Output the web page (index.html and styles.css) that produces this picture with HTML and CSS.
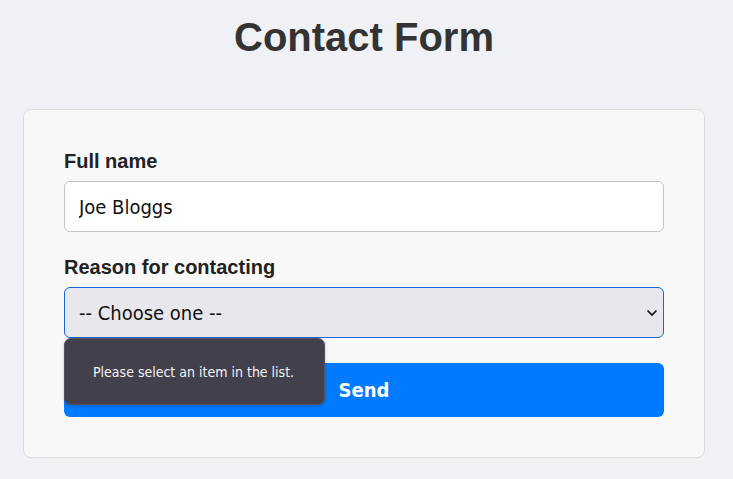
FILE: index.html
```html
<!DOCTYPE html>
<html lang="en">
<head>
<meta charset="utf-8">
<title>Contact Form</title>
<link rel="stylesheet" href="styles.css">
</head>
<body>
<main class="page">
  <h1 class="title">Contact Form</h1>
  <form class="card">
    <div class="group">
      <label class="label" for="name">Full name</label>
      <input class="field" id="name" type="text" value="Joe Bloggs">
    </div>
    <div class="group select-group">
      <label class="label" for="reason">Reason for contacting</label>
      <div class="select-wrap">
        <select class="field select" id="reason">
          <option>-- Choose one --</option>
        </select>
        <svg class="chevron" width="12" height="8" viewBox="0 0 12 8" aria-hidden="true"><path d="M1.5 1.5 L6 6 L10.5 1.5" fill="none" stroke="#111" stroke-width="1.7"/></svg>
      </div>
      <div class="bubble">Please select an item in the list.</div>
    </div>
    <button class="send" type="button">Send</button>
  </form>
</main>
</body>
</html>
```
FILE: styles.css
```css
html, body {
  margin: 0;
  padding: 0;
  background: #f0f1f5;
}
.page {
  padding: 14px 28px 0 23px;
  font-family: "Liberation Sans", Arial, sans-serif;
}
.title {
  margin: 0 0 49px;
  text-align: center;
  font-size: 40px;
  font-weight: bold;
  color: #333;
  line-height: 46px;
}
.card {
  box-sizing: border-box;
  width: 682px;
  background: #f8f8f9;
  border: 1px solid #dcdcdf;
  border-radius: 8px;
  padding: 40px 40px 40px;
  display: flex;
  flex-direction: column;
}
.group {
  display: flex;
  flex-direction: column;
  margin-bottom: 24px;
}
.select-group {
  position: relative;
  margin-bottom: 25px;
}
.label {
  font-size: 20px;
  font-weight: bold;
  color: #222;
  line-height: 23px;
  margin-bottom: 8px;
}
.field {
  box-sizing: border-box;
  width: 600px;
  height: 51px;
  margin: 0;
  padding: 0 14px;
  font-family: "DejaVu Sans Condensed", "DejaVu Sans", sans-serif;
  font-stretch: condensed;
  font-size: 20px;
  color: #111;
  background: #fff;
  border: 1px solid #c4c4c4;
  border-radius: 6px;
  outline: none;
}
.select-wrap {
  position: relative;
}
.select {
  appearance: none;
  -webkit-appearance: none;
  background: #e8e7ec;
  border-color: #1a66d9;
}
.chevron {
  position: absolute;
  right: 6px;
  top: 22px;
}
.bubble {
  position: absolute;
  left: 0;
  top: 82px;
  box-sizing: border-box;
  width: 261px;
  height: 67px;
  background: #42404c;
  border: 1px solid #55535f;
  border-radius: 7px;
  box-shadow: 0 1px 3px rgba(0,0,0,0.25);
  color: #f4f4f6;
  font-family: "DejaVu Sans Condensed", "DejaVu Sans", sans-serif;
  font-stretch: condensed;
  font-size: 14px;
  display: flex;
  align-items: center;
  padding-left: 28px;
  z-index: 2;
}
.send {
  box-sizing: border-box;
  width: 600px;
  height: 54px;
  border: none;
  border-radius: 6px;
  background: #007bff;
  color: #fff;
  font-family: "DejaVu Sans Condensed", "DejaVu Sans", sans-serif;
  font-stretch: condensed;
  font-weight: bold;
  font-size: 20px;
  padding: 0;
}
```
